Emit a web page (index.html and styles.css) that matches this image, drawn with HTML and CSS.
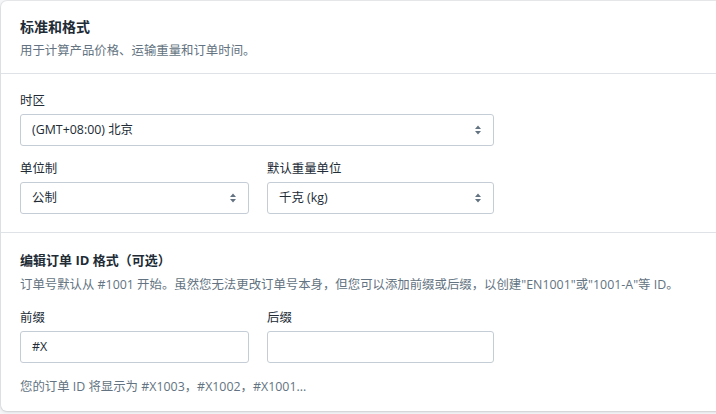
FILE: index.html
```html
<!DOCTYPE html>
<html lang="zh-CN">
<head>
<meta charset="utf-8">
<title>标准和格式</title>
<link rel="stylesheet" href="styles.css">
</head>
<body>
<div class="card">
  <section class="section section-head">
    <h2 class="title">标准和格式</h2>
    <p class="muted">用于计算产品价格、运输重量和订单时间。</p>
  </section>
  <section class="section section-form">
    <div class="form">
      <div class="field">
        <label class="label">时区</label>
        <div class="select">
          <span class="select-value">(GMT+08:00) 北京</span>
          <svg class="arrows" width="8" height="12" viewBox="0 0 8 12"><path d="M4 1.5 L7 5 H1 Z M4 10.5 L7 7 H1 Z" fill="#637381"/></svg>
        </div>
      </div>
      <div class="row">
        <div class="field">
          <label class="label">单位制</label>
          <div class="select">
            <span class="select-value">公制</span>
            <svg class="arrows" width="8" height="12" viewBox="0 0 8 12"><path d="M4 1.5 L7 5 H1 Z M4 10.5 L7 7 H1 Z" fill="#637381"/></svg>
          </div>
        </div>
        <div class="field">
          <label class="label">默认重量单位</label>
          <div class="select">
            <span class="select-value">千克 (kg)</span>
            <svg class="arrows" width="8" height="12" viewBox="0 0 8 12"><path d="M4 1.5 L7 5 H1 Z M4 10.5 L7 7 H1 Z" fill="#637381"/></svg>
          </div>
        </div>
      </div>
    </div>
  </section>
  <section class="section section-order">
    <h3 class="subtitle">编辑订单 ID 格式（可选）</h3>
    <p class="muted desc">订单号默认从 #1001 开始。虽然您无法更改订单号本身，但您可以添加前缀或后缀，以创建"EN1001"或"1001-A"等 ID。</p>
    <div class="form">
      <div class="row">
        <div class="field">
          <label class="label">前缀</label>
          <div class="input"><span class="select-value">#X</span></div>
        </div>
        <div class="field">
          <label class="label">后缀</label>
          <div class="input"></div>
        </div>
      </div>
    </div>
    <p class="muted help">您的订单 ID 将显示为 #X1003，#X1002，#X1001...</p>
  </section>
</div>
</body>
</html>
```
FILE: styles.css
```css
html, body {
  margin: 0;
  padding: 0;
  background: #f4f6f8;
  overflow: hidden;
  width: 716px;
  height: 414px;
}
body {
  padding: 1px 0 0 1px;
  box-sizing: border-box;
  font-family: "Open Sans", "Noto Sans CJK SC", sans-serif;
  font-size: 12.4px;
  color: #212b36;
}
.card {
  width: 740px;
  height: 410px;
  box-sizing: border-box;
  background: #fff;
  border-radius: 6px;
  box-shadow: 0 0 0 1px rgba(63,63,68,0.06), 0 1px 3px 0 rgba(63,63,68,0.18);
}
.section {
  padding: 0 19px;
}
.section + .section {
  border-top: 1px solid #dfe3e8;
}
.section-head {
  padding-top: 16px;
  height: 72px;
  box-sizing: border-box;
}
.title {
  margin: 0;
  font-size: 14px;
  line-height: 20px;
  font-weight: 700;
}
.muted {
  margin: 0;
  color: #637381;
  line-height: 20px;
}
.section-head .muted {
  margin-top: 4px;
}
.section-form {
  padding-top: 17px;
  padding-bottom: 18px;
}
.form {
  width: 474px;
  display: flex;
  flex-direction: column;
  gap: 13px;
}
.row {
  display: grid;
  grid-template-columns: 229px 227px;
  column-gap: 18px;
}
.field {
  display: flex;
  flex-direction: column;
  gap: 3px;
}
.label {
  line-height: 20px;
}
.select, .input {
  height: 32px;
  box-sizing: border-box;
  border: 1px solid #c4cdd5;
  border-radius: 3px;
  display: flex;
  align-items: center;
  justify-content: space-between;
  padding: 0 11px 0 11px;
  background: #fff;
}
.select-value {
  line-height: 20px;
}
.arrows {
  display: block;
}
.section-order {
  padding-top: 17px;
}
.subtitle {
  margin: 0;
  font-size: 13px;
  line-height: 20px;
  font-weight: 700;
}
.desc {
  margin-top: 5px;
  margin-bottom: 13px;
  white-space: nowrap;
}
.help {
  margin-top: 14px;
}
```
